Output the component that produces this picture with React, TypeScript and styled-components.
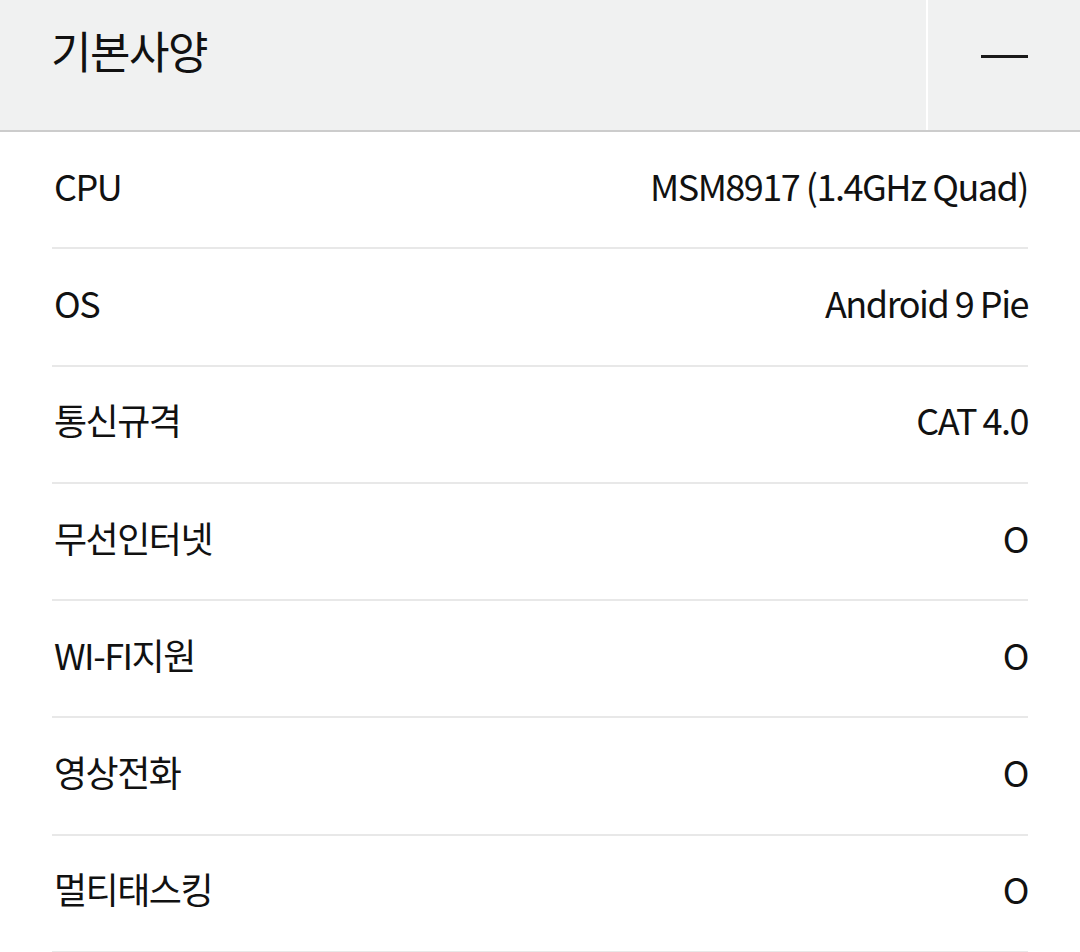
import styled, { createGlobalStyle } from "styled-components";

const GlobalStyle = createGlobalStyle`
  body {
    margin: 0;
    background: #ffffff;
    font-family: "Noto Sans CJK KR", "Noto Sans", sans-serif;
    color: #111111;
  }
`;

const Header = styled.div`
  display: flex;
  height: 130px;
  background-color: #f0f1f1;
  border-bottom: 2px solid #cccccc;
`;

const Title = styled.h2`
  flex: 1;
  display: flex;
  align-items: center;
  margin: 0;
  padding: 0 0 30px 51px;
  font-size: 44px;
  font-weight: 400;
  letter-spacing: -1.5px;
`;

const ToggleButton = styled.button`
  width: 154px;
  border: none;
  border-left: 2px solid #ffffff;
  background: transparent;
  display: flex;
  align-items: center;
  justify-content: center;
  padding: 0 0 18px 0;
  cursor: pointer;
`;

const Minus = styled.span`
  display: block;
  width: 47px;
  height: 3px;
  background: #1a1a1a;
`;

const List = styled.div`
  padding: 0 52px;
`;

const Row = styled.div`
  display: flex;
  align-items: center;
  justify-content: space-between;
  box-sizing: border-box;
  height: 117.3px;
  padding: 0 0 10px 2px;
  border-bottom: 2px solid #e8e8e8;
  font-size: 36px;
  letter-spacing: -1.5px;
`;

const Label = styled.span``;

const Value = styled.span`
  text-align: right;
`;

const specs: [string, string][] = [
  ["CPU", "MSM8917 (1.4GHz Quad)"],
  ["OS", "Android 9 Pie"],
  ["통신규격", "CAT 4.0"],
  ["무선인터넷", "O"],
  ["WI-FI지원", "O"],
  ["영상전화", "O"],
  ["멀티태스킹", "O"],
];

export default function App(): JSX.Element {
  return (
    <>
      <GlobalStyle />
      <Header>
        <Title>기본사양</Title>
        <ToggleButton aria-label="접기">
          <Minus />
        </ToggleButton>
      </Header>
      <List>
        {specs.map(([label, value]) => (
          <Row key={label}>
            <Label>{label}</Label>
            <Value>{value}</Value>
          </Row>
        ))}
      </List>
    </>
  );
}
